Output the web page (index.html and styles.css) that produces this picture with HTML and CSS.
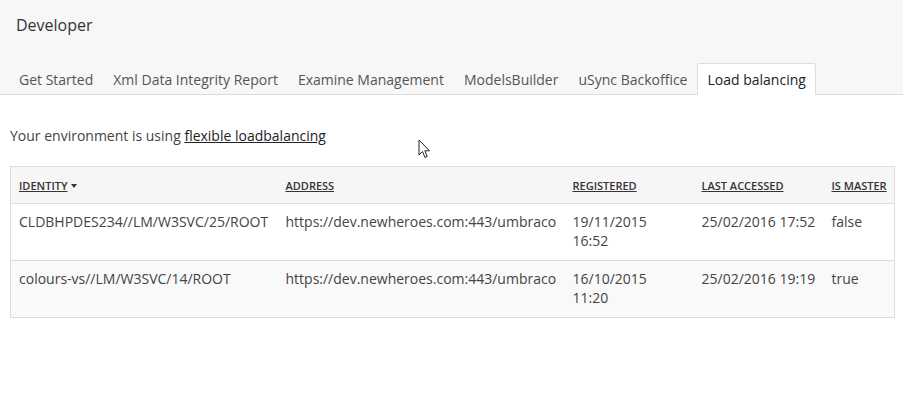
FILE: index.html
```html
<!DOCTYPE html>
<html lang="en">

<head>
    <meta charset="UTF-8">
    <title>Developer</title>
    <link rel="stylesheet" href="styles.css">
</head>

<body>
    <div class="header">
        <div class="title">Developer</div>
        <ul class="tabs">
            <li>Get Started</li>
            <li>Xml Data Integrity Report</li>
            <li>Examine Management</li>
            <li>ModelsBuilder</li>
            <li>uSync Backoffice</li>
            <li class="active">Load balancing</li>
        </ul>
    </div>
    <div class="content">
        <p class="intro">Your environment is using <a href="#">flexible loadbalancing</a></p>
        <table class="servers">
            <colgroup>
                <col class="c-id">
                <col class="c-addr">
                <col class="c-reg">
                <col class="c-last">
                <col class="c-master">
            </colgroup>
            <thead>
                <tr>
                    <th class="first"><a href="#">Identity</a> <span class="caret"></span></th>
                    <th><a href="#">Address</a></th>
                    <th><a href="#">Registered</a></th>
                    <th><a href="#">Last accessed</a></th>
                    <th><a href="#">Is master</a></th>
                </tr>
            </thead>
            <tbody>
                <tr>
                    <td class="first">CLDBHPDES234//LM/W3SVC/25/ROOT</td>
                    <td>https://dev.newheroes.com:443/umbraco</td>
                    <td>19/11/2015 16:52</td>
                    <td class="nowrap">25/02/2016 17:52</td>
                    <td>false</td>
                </tr>
                <tr>
                    <td class="first">colours-vs//LM/W3SVC/14/ROOT</td>
                    <td>https://dev.newheroes.com:443/umbraco</td>
                    <td>16/10/2015 11:20</td>
                    <td class="nowrap">25/02/2016 19:19</td>
                    <td>true</td>
                </tr>
            </tbody>
        </table>
    </div>
    <svg class="cursor" width="13" height="20" viewBox="0 0 13 20">
        <path d="M1 1 L1 16 L4.5 12.5 L7 18.5 L9.2 17.5 L6.8 11.8 L11.5 11.8 Z" fill="#fff" stroke="#222" stroke-width="1"/>
    </svg>
</body>

</html>
```

FILE: styles.css
```css
body {
    margin: 0;
    font-family: 'Open Sans', sans-serif;
    font-size: 14px;
    color: #343434;
    background: #fff;
    position: relative;
}

.header {
    background: #f7f7f7;
    border-bottom: 1px solid #dddddd;
    height: 94px;
    display: flex;
    flex-direction: column;
    justify-content: space-between;
}

.title {
    padding: 13px 0 0 16px;
    font-size: 16px;
    line-height: 24px;
    color: #343434;
}

.tabs {
    list-style: none;
    margin: 0 0 -1px 0;
    padding: 0 0 0 9px;
    display: flex;
}

.tabs li {
    padding: 6px 9px 5px;
    line-height: 19px;
    height: 19px;
    color: #555;
    border: 1px solid transparent;
    border-bottom: none;
    border-radius: 3px 3px 0 0;
}

.tabs li.active {
    background: #fff;
    color: #222;
    border-color: #dddddd;
    padding-bottom: 6px;
}

.content {
    padding: 0 8px 0 10px;
}

.intro {
    margin: 31px 0 20px;
    line-height: 20px;
    color: #444;
}

.intro a {
    color: #222;
}

.servers {
    width: 885px;
    table-layout: fixed;
    border-collapse: collapse;
    border: 1px solid #dddddd;
}

.c-id { width: 266px; }
.c-addr { width: 287px; }
.c-reg { width: 129px; }
.c-last { width: 130px; }

.servers th {
    background: #f6f6f6;
    text-align: left;
    font-size: 11px;
    font-weight: 600;
    text-transform: uppercase;
    white-space: nowrap;
    padding: 11px 9px 10px 9px;
    line-height: 15px;
    border-bottom: 1px solid #dddddd;
}

.servers th a {
    color: #343434;
}

.caret {
    display: inline-block;
    width: 0;
    height: 0;
    border-left: 3.5px solid transparent;
    border-right: 3.5px solid transparent;
    border-top: 4px solid #343434;
    vertical-align: middle;
    margin-left: 1px;
    margin-top: -2px;
}

.servers td {
    padding: 8px 9px 8px 9px;
    line-height: 19px;
    height: 40px;
    vertical-align: top;
    color: #444;
    border-top: 1px solid #dddddd;
}

.servers .first {
    padding-left: 8px;
}

.servers td.nowrap {
    white-space: nowrap;
}

.servers tbody tr:nth-child(even) td {
    background: #f9f9f9;
}

.cursor {
    position: absolute;
    left: 418px;
    top: 139px;
}
```
